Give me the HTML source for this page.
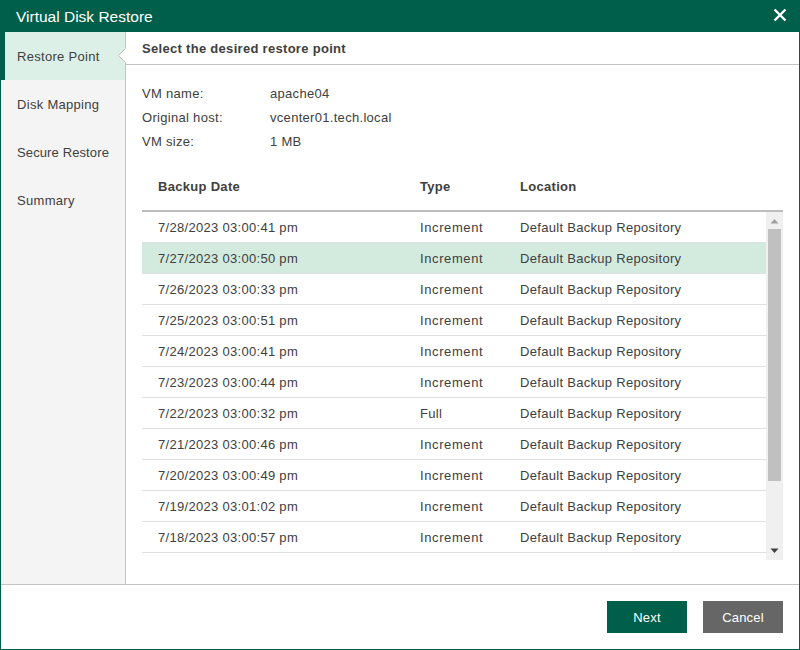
<!DOCTYPE html>
<html><head><meta charset="utf-8">
<style>
*{margin:0;padding:0;box-sizing:border-box;}
html,body{width:800px;height:650px;overflow:hidden;background:#fff;}
body{font-family:"Liberation Sans",sans-serif;color:#404040;position:relative;letter-spacing:0.3px;}
.abs{position:absolute;white-space:nowrap;}
#frame{position:absolute;left:0;top:0;width:800px;height:650px;border:1px solid #005f4b;border-top:none;}
#title{position:absolute;left:0;top:0;width:800px;height:32px;background:#005f4b;}
#title .t{position:absolute;left:16px;top:8px;font-size:15.5px;letter-spacing:0;color:#fff;}
#side{position:absolute;left:1px;top:32px;width:124px;height:552px;background:#f4f4f4;}
#sideborder{position:absolute;left:125px;top:32px;width:1px;height:552px;background:#c4c4c4;}
#sel{position:absolute;left:0;top:32px;width:125px;height:48px;background:#ddf0e7;border-left:5px solid #005f4b;}
.si{position:absolute;left:17px;font-size:13px;color:#404040;}
#hdrline{position:absolute;left:126px;top:64px;width:673px;height:1px;background:#c4c4c4;}
.hd{position:absolute;left:142px;top:41px;font-size:13px;font-weight:bold;color:#404040;}
.lbl{position:absolute;font-size:13px;color:#404040;}
#th{position:absolute;left:142px;top:210px;width:641px;height:2px;background:#bdbdbd;}
.row{position:absolute;left:142px;width:624px;height:31px;border-bottom:1px solid #e0e0e0;}
.row.s{background:#d3ebdf;}
.row span{position:absolute;top:8px;font-size:13px;color:#404040;}
#sb{position:absolute;left:766px;top:212px;width:17px;height:348px;background:#f0f0f0;}
#thumb{position:absolute;left:768px;top:229px;width:13px;height:252px;background:#c0c0c0;}
#footline{position:absolute;left:1px;top:584px;width:798px;height:1px;background:#c4c4c4;}
.btn{position:absolute;top:601px;width:80px;height:32px;color:#fff;font-size:13px;letter-spacing:0.15px;text-align:center;line-height:32px;padding-top:1px;}
</style></head><body>
<div id="title"><span class="t">Virtual Disk Restore</span>
<svg class="abs" style="left:773px;top:8px" width="14" height="14" viewBox="0 0 14 14"><path d="M1.5 1.5L12.5 12.5M12.5 1.5L1.5 12.5" stroke="#fff" stroke-width="2.4"/></svg>
</div>
<div id="frame"></div>
<div id="side"></div>
<div id="sideborder"></div>
<div id="sel"></div>
<div class="si" style="top:49px">Restore Point</div>
<div class="si" style="top:97px">Disk Mapping</div>
<div class="si" style="top:145px;letter-spacing:0.12px">Secure Restore</div>
<div class="si" style="top:193px">Summary</div>
<svg class="abs" style="left:117px;top:47px" width="10" height="18" viewBox="0 0 10 18"><path d="M9 1L2 8.5L9 16Z" fill="#fff"/><path d="M8.5 1.5L1.5 8.5L8.5 15.5" fill="none" stroke="#c4c4c4" stroke-width="1"/></svg>
<div class="hd">Select the desired restore point</div>
<div id="hdrline"></div>
<div class="lbl" style="left:142px;top:86px">VM name:</div>
<div class="lbl" style="left:270px;top:86px">apache04</div>
<div class="lbl" style="left:142px;top:110px">Original host:</div>
<div class="lbl" style="left:270px;top:110px">vcenter01.tech.local</div>
<div class="lbl" style="left:142px;top:134px">VM size:</div>
<div class="lbl" style="left:270px;top:134px">1 MB</div>
<div class="lbl" style="left:158px;top:179px;font-weight:bold">Backup Date</div>
<div class="lbl" style="left:420px;top:179px;font-weight:bold">Type</div>
<div class="lbl" style="left:520px;top:179px;font-weight:bold">Location</div>
<div id="th"></div>
<div id="rows"></div>
<div class="row" style="top:212px"><span style="left:16px">7/28/2023 03:00:41 pm</span><span style="left:278px;letter-spacing:0.6px">Increment</span><span style="left:378px">Default Backup Repository</span></div>
<div class="row s" style="top:243px"><span style="left:16px">7/27/2023 03:00:50 pm</span><span style="left:278px;letter-spacing:0.6px">Increment</span><span style="left:378px">Default Backup Repository</span></div>
<div class="row" style="top:274px"><span style="left:16px">7/26/2023 03:00:33 pm</span><span style="left:278px;letter-spacing:0.6px">Increment</span><span style="left:378px">Default Backup Repository</span></div>
<div class="row" style="top:305px"><span style="left:16px">7/25/2023 03:00:51 pm</span><span style="left:278px;letter-spacing:0.6px">Increment</span><span style="left:378px">Default Backup Repository</span></div>
<div class="row" style="top:336px"><span style="left:16px">7/24/2023 03:00:41 pm</span><span style="left:278px;letter-spacing:0.6px">Increment</span><span style="left:378px">Default Backup Repository</span></div>
<div class="row" style="top:367px"><span style="left:16px">7/23/2023 03:00:44 pm</span><span style="left:278px;letter-spacing:0.6px">Increment</span><span style="left:378px">Default Backup Repository</span></div>
<div class="row" style="top:398px"><span style="left:16px">7/22/2023 03:00:32 pm</span><span style="left:278px">Full</span><span style="left:378px">Default Backup Repository</span></div>
<div class="row" style="top:429px"><span style="left:16px">7/21/2023 03:00:46 pm</span><span style="left:278px;letter-spacing:0.6px">Increment</span><span style="left:378px">Default Backup Repository</span></div>
<div class="row" style="top:460px"><span style="left:16px">7/20/2023 03:00:49 pm</span><span style="left:278px;letter-spacing:0.6px">Increment</span><span style="left:378px">Default Backup Repository</span></div>
<div class="row" style="top:491px"><span style="left:16px">7/19/2023 03:01:02 pm</span><span style="left:278px;letter-spacing:0.6px">Increment</span><span style="left:378px">Default Backup Repository</span></div>
<div class="row" style="top:522px"><span style="left:16px">7/18/2023 03:00:57 pm</span><span style="left:278px;letter-spacing:0.6px">Increment</span><span style="left:378px">Default Backup Repository</span></div>
<div id="sb"></div>
<div id="thumb"></div>
<svg class="abs" style="left:770px;top:217.5px" width="9" height="6" viewBox="0 0 9 6"><path d="M0.5 5.5L4.5 1L8.5 5.5Z" fill="#a0a0a0"/></svg>
<svg class="abs" style="left:770px;top:548px" width="9" height="6" viewBox="0 0 9 6"><path d="M0.5 0.5L4.5 5L8.5 0.5Z" fill="#404040"/></svg>
<div id="footline"></div>
<div class="btn" style="left:607px;background:#005f4b">Next</div>
<div class="btn" style="left:703px;background:#666">Cancel</div>
</body></html>
